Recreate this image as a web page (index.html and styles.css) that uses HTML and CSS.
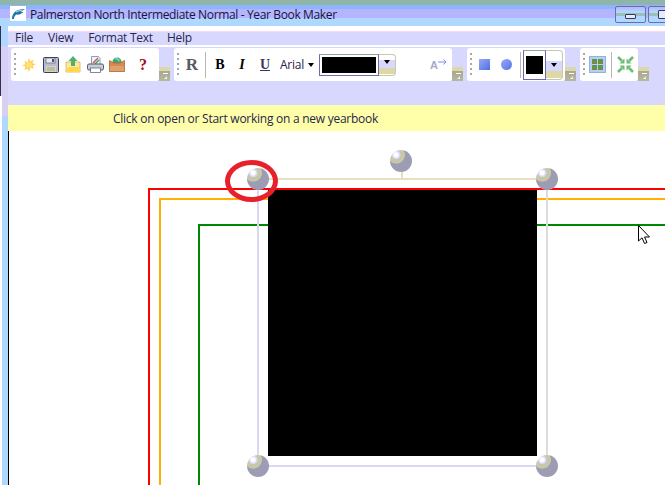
FILE: index.html
```html
<!DOCTYPE html>
<html lang="en">
<head>
  <meta charset="UTF-8">
  <title>Palmerston North Intermediate Normal - Year Book Maker</title>
  <link rel="stylesheet" href="styles.css">
</head>
<body>
  <div class="app">
    <header class="titlebar">
      <span class="app-icon">
        <svg width="16" height="15" viewBox="0 0 16 15"><path d="M2 13C2 7 6 3 15 3C13 4 12 5 11 6L13.500 6C11 8 9 9 6.500 8.500C5 9 4 11 4 13Z" fill="#1f78a8"/><path d="M6 6C8 5 10 4.500 12 4.500" stroke="#fff" stroke-width="0.8" fill="none"/></svg>
      </span>
      <span class="title-text">Palmerston North Intermediate Normal - Year Book Maker</span>
      <div class="win-buttons">
        <button class="win-btn"><span class="win-min"></span></button>
        <button class="win-btn"><span class="win-max"></span></button>
      </div>
    </header>

    <div class="frame">
      <div class="frame-edge"></div>
      <main class="main">
        <nav class="menubar">
          <span class="menu-file">File</span>
          <span class="menu-view">View</span>
          <span class="menu-format">Format Text</span>
          <span>Help</span>
        </nav>

        <div class="toolbars">
          <!-- file tools -->
          <div class="panel panel-file">
            <span class="grip"></span>
            <span class="tool">
              <svg width="16" height="16" viewBox="0 0 16 16"><path d="M8 1l1.300 3.500 3.200-1.800-1 3.500 3.500 1-3.200 1.400 1 3.400-3.200-1.500L8 15l-1.500-3.500-3 1.500 1-3.400L1 8.200l3.500-1-1-3.500 3 1.800z" fill="#ffd050"/><circle cx="8" cy="8" r="3" fill="#ffe078"/></svg>
            </span>
            <span class="tool">
              <svg width="16" height="16" viewBox="0 0 16 16"><rect x="0.500" y="0.500" width="15" height="15" rx="1" fill="#b8bcd0" stroke="#3c3c50"/><rect x="3" y="1" width="9" height="5" fill="#e8e8f0" stroke="#50506c" stroke-width="0.6"/><rect x="9" y="2" width="2" height="3" fill="#50506c"/><rect x="3" y="9" width="10" height="6" fill="#d8d4b8"/><path d="M4 11h8M4 13h8" stroke="#888" stroke-width="0.7"/></svg>
            </span>
            <span class="tool">
              <svg width="16" height="17" viewBox="0 0 16 17"><path d="M1 6h14v10H1z" fill="#ffe8a0" stroke="#d0b060" stroke-width="0.8"/><path d="M3 11h12v5H1z" fill="#ffd850"/><path d="M8 0l4.500 5H10v5H6V5H3.500z" fill="#50b070"/></svg>
            </span>
            <span class="tool">
              <svg width="17" height="17" viewBox="0 0 17 17"><path d="M4.500 0.500h7l1.500 2v7h-8.500z" fill="#eef4ff" stroke="#6a88b8" stroke-width="0.8"/><path d="M6 7l5-5" stroke="#e05040" stroke-width="1.500"/><path d="M8 8l4-4" stroke="#40a050" stroke-width="1.200"/><rect x="0.500" y="8" width="16" height="6" rx="1.500" fill="#c8ccd8" stroke="#505868"/><rect x="3.500" y="12" width="10" height="4.500" fill="#fff" stroke="#505868" stroke-width="0.7"/></svg>
            </span>
            <span class="tool">
              <svg width="16" height="15" viewBox="0 0 16 15"><circle cx="8" cy="5" r="4.500" fill="#3ca860"/><path d="M6 1.500c2 0 4 1 4 3" stroke="#80d0e0" stroke-width="1.500" fill="none"/><path d="M0.500 3.500L5 6h6l4.500-2.500V14.500H0.500z" fill="#d88850" stroke="#a86840" stroke-width="0.8"/><path d="M1 9h14v5H1z" fill="#e0a068"/></svg>
            </span>
            <span class="tool tool-help">?</span>
          </div>
          <span class="overflow"></span>

          <!-- text tools -->
          <div class="panel panel-text">
            <span class="grip"></span>
            <span class="tool tool-r">R</span>
            <span class="sep"></span>
            <span class="tool tool-b">B</span>
            <span class="tool tool-i">I</span>
            <span class="tool tool-u">U</span>
            <span class="font-pick">Arial</span>
            <span class="caret"></span>
            <span class="colour colour-wide"><span class="swatch"></span></span>
            <span class="colour-arrow colour-arrow-wide"><span class="caret"></span></span>
            <span class="text-size">A<svg width="9" height="6" viewBox="0 0 9 6"><path d="M0 3h8M5.500 0.500L8 3 5.500 5.500" fill="none" stroke="#7c8cf0"/></svg></span>
          </div>
          <span class="overflow"></span>

          <!-- shape tools -->
          <div class="panel panel-shape">
            <span class="grip"></span>
            <span class="tool"><span class="shape-square"></span></span>
            <span class="tool"><span class="shape-circle"></span></span>
            <span class="sep"></span>
            <span class="colour colour-tall"><span class="swatch"></span></span>
            <span class="colour-arrow colour-arrow-tall"><span class="caret"></span></span>
          </div>
          <span class="overflow"></span>

          <!-- layout tools -->
          <div class="panel panel-layout">
            <span class="grip"></span>
            <span class="tool">
              <svg width="17" height="17" viewBox="0 0 17 17"><rect x="0.500" y="0.500" width="16" height="16" fill="#b4d0f4" stroke="#98b0dc"/><rect x="3" y="3" width="5" height="5" fill="#5c9a48"/><rect x="9" y="3" width="5" height="5" fill="#5c9a48"/><rect x="3" y="9" width="5" height="5" fill="#5c9a48"/><rect x="9" y="9" width="5" height="5" fill="#5c9a48"/><path d="M3 7.500h5M9 7.500h5M3 13.500h5M9 13.500h5" stroke="#a87040"/></svg>
            </span>
            <span class="sep"></span>
            <span class="tool">
              <svg width="17" height="17" viewBox="0 0 17 17" fill="#6cbc74" stroke="none"><path d="M1 1L5 5M16 1L12 5M1 16L5 12M16 16L12 12" stroke="#6cbc74" stroke-width="2.500"/><path d="M7.500 7.500V2.500L2.500 7.500zM9.500 7.500V2.500L14.500 7.500zM7.500 9.500V14.500L2.500 9.500zM9.500 9.500V14.500L14.500 9.500z"/></svg>
            </span>
          </div>
          <span class="overflow"></span>
        </div>

        <div class="status">Click on open or Start working on a new yearbook</div>

        <section class="canvas">
          <div class="guide guide-red"></div>
          <div class="guide guide-orange"></div>
          <div class="guide guide-green"></div>
          <div class="photo"></div>
          <div class="sel-line sel-top"></div>
          <div class="sel-line sel-bottom"></div>
          <div class="sel-line sel-left"></div>
          <div class="sel-line sel-right"></div>
          <div class="sel-stem"></div>
          <span class="handle handle-rotate"></span>
          <span class="handle handle-tl"></span>
          <span class="handle handle-tr"></span>
          <span class="handle handle-bl"></span>
          <span class="handle handle-br"></span>
          <div class="callout"></div>
          <svg class="cursor" width="13" height="20" viewBox="0 0 13 20"><path d="M0.500 0.500V16L4 12.800 6.500 18.500 9 17.500 6.500 12H11.500z" fill="#fff" stroke="#000"/></svg>
        </section>
      </main>
    </div>
  </div>
</body>
</html>
```

FILE: styles.css
```css
html, body {
  margin: 0;
  padding: 0;
}
body {
  width: 665px;
  height: 485px;
  overflow: hidden;
  font-family: "Open Sans", "Noto Sans", sans-serif;
  font-size: 12px;
  color: #1c1c3c;
  background: #fff;
}
.app {
  width: 665px;
  height: 485px;
  display: flex;
  flex-direction: column;
}

/* title bar */
.titlebar {
  height: 26px;
  flex: none;
  display: flex;
  align-items: flex-start;
  box-sizing: border-box;
  padding-left: 10px;
  background: linear-gradient(#8fb5a8 0, #8fb5a8 5px, #8db4ff 5px, #8db4ff 9px, #b4b4ff 9px, #b4b4ff 18px, #b0d8ff 18px);
}
.app-icon {
  width: 16px;
  height: 15px;
  margin-top: 6px;
  background: #fff;
  display: flex;
}
.title-text {
  margin: 6px 0 0 4px;
  line-height: 17px;
  letter-spacing: -0.36px;
  color: #14143c;
  white-space: nowrap;
}
.win-buttons {
  margin-left: auto;
  display: flex;
  gap: 2px;
  width: 50px;
  flex: none;
  margin-top: 6px;
  overflow: hidden;
}
.win-btn {
  width: 31px;
  height: 17px;
  flex: none;
  padding: 0;
  box-sizing: border-box;
  border: 1px solid #6c6cac;
  border-radius: 2px;
  background: linear-gradient(#b4b4ff 0, #b0d8ff 5px, #b0d8ff 6px, #9cc0b4 6px, #9cc0b4 9px, #b0d8ff 9px);
  display: flex;
  align-items: center;
  justify-content: center;
}
.win-min {
  width: 9px;
  height: 3px;
  margin-top: 3px;
  border: 1px solid #36365c;
  border-radius: 1px;
  background: #e8e8ff;
}
.win-max {
  width: 9px;
  height: 7px;
  border: 1px solid #36365c;
  border-radius: 1px;
  background: #e8e8ff;
}

/* left frame and main area */
.frame {
  flex: 1;
  display: flex;
  min-height: 0;
}
.frame-edge {
  width: 8px;
  flex: none;
  background:
    linear-gradient(#30304c, #30304c) 0 0 / 1px 70px no-repeat,
    linear-gradient(#fff, #fff) 0 70px / 2px 100% no-repeat,
    linear-gradient(#b0d8ff 0, #b0d8ff 20px, #d8d0f4 20px, #d8d0f4 90px, #b0d8ff 90px);
}
.main {
  flex: 1;
  min-width: 0;
  display: flex;
  flex-direction: column;
  padding-top: 5px;
  background: #d8d8ff;
}

/* menu */
.menubar {
  height: 13px;
  flex: none;
  display: flex;
  align-items: flex-start;
  padding-left: 7px;
  border-top: 1px solid #ffd8f0;
  line-height: 11px;
  letter-spacing: -0.25px;
  color: #26264a;
  box-shadow: 0 -5px 0 #fff;
}
.menu-file { margin-right: 15px; }
.menu-view { margin-right: 15px; }
.menu-format { margin-right: 14px; }

/* toolbars */
.toolbars {
  height: 34px;
  flex: none;
  display: flex;
  align-items: flex-end;
  padding-left: 3px;
  border-top: 2px solid #fff;
  margin-bottom: 24px;
}
.panel {
  height: 33px;
  flex: none;
  display: flex;
  align-items: center;
  box-sizing: border-box;
  padding-left: 3px;
  background: #fff;
  border-radius: 3px;
}
.panel-file { width: 148px; }
.panel-text { width: 278px; }
.panel-shape { width: 98px; }
.panel-layout { width: 58px; }
.grip {
  width: 2px;
  height: 24px;
  flex: none;
  margin-right: 2px;
  background: repeating-linear-gradient(#a8a8a8 0, #a8a8a8 2px, transparent 2px, transparent 5px);
}
.panel-shape .grip,
.panel-layout .grip { margin-right: 1px; }
.tool {
  width: 22px;
  height: 22px;
  flex: none;
  display: flex;
  align-items: center;
  justify-content: center;
  font-family: "Liberation Serif", serif;
  font-weight: bold;
  font-size: 14px;
  color: #000;
}
.tool-help {
  margin-left: 4px;
  font-size: 16px;
  color: #a00c1c;
}
.tool-r {
  font-size: 17px;
  color: #5a5a60;
}
.tool-i { font-style: italic; }
.tool-u {
  text-decoration: underline;
  margin-left: 1px;
  color: #383858;
}
.sep {
  width: 1px;
  height: 26px;
  flex: none;
  background: #b8b8b0;
}
.panel-text .sep { margin: 0 3px 0 2px; }
.panel-shape .sep { margin: 0 2px 0 3px; }
.panel-layout .sep { margin: 0 2px 0 3px; }
.font-pick {
  margin: 0 4px 0 4px;
  letter-spacing: -0.25px;
  color: #26264a;
}
.caret {
  width: 0;
  height: 0;
  flex: none;
  border-style: solid;
  border-width: 4px 3.5px 0;
  border-color: #000 transparent transparent;
}
.colour {
  flex: none;
  box-sizing: border-box;
  display: flex;
  background: #fff;
  border: 1px solid;
  border-color: #8aa89a #6c6cac #6c6cac #6c6cac;
}
.colour-wide {
  width: 60px;
  height: 22px;
  padding: 2px;
  margin-left: 5px;
}
.colour-tall {
  width: 23px;
  height: 30px;
  padding: 5px 2px;
}
.swatch {
  flex: 1;
  background: #000;
}
.colour-arrow {
  flex: none;
  box-sizing: border-box;
  display: flex;
  justify-content: center;
  padding-top: 5px;
  border: 1px solid #c8c8a8;
  border-left: 0;
  border-radius: 0 4px 4px 0;
}
.colour-arrow-wide {
  width: 17px;
  height: 22px;
  background: linear-gradient(#fff 0, #fff 5px, #d8d8ff 5px, #d8d8ff 13px, #dcd8a8 13px, #dcd8a8 19px, #fff 19px);
}
.colour-arrow-tall {
  width: 17px;
  height: 30px;
  padding-top: 12px;
  background: linear-gradient(#fff 0, #fff 10px, #d8d8ff 10px, #d8d8ff 20px, #dcd8a8 20px, #dcd8a8 27px, #fff 27px);
}
.text-size {
  margin-left: 34px;
  display: flex;
  align-items: flex-start;
  font-family: "Liberation Sans", sans-serif;
  font-size: 11px;
  font-weight: bold;
  line-height: 12px;
  color: #a8a8c4;
}
.shape-square {
  width: 11px;
  height: 11px;
  background: linear-gradient(135deg, #9ca8f8, #4c70e0);
}
.shape-circle {
  width: 11px;
  height: 11px;
  border-radius: 50%;
  background: linear-gradient(135deg, #a0a8f8, #5474e4);
}
.overflow {
  width: 11px;
  height: 14px;
  flex: none;
  margin-right: 4px;
  box-sizing: border-box;
  padding: 2px 2px 0 4px;
  border-top: 4px solid #dcd8a8;
  background: linear-gradient(#a8a890, #b8b8a0);
  display: flex;
  flex-direction: column;
  align-items: flex-end;
  gap: 2px;
}
.overflow::before {
  content: "";
  width: 5px;
  height: 1px;
  background: #fff;
}
.overflow::after {
  content: "";
  width: 0;
  height: 0;
  margin-right: 1px;
  border-style: solid;
  border-width: 0 0 3px 3px;
  border-color: transparent transparent #f0f0e8;
}

/* status strip */
.status {
  height: 26px;
  flex: none;
  box-sizing: border-box;
  padding: 1px 0 0 105px;
  line-height: 26px;
  letter-spacing: -0.26px;
  color: #26264a;
  background: #ffffaa;
  overflow: hidden;
}

/* drawing area: everything here sits at its own place on the page */
.canvas {
  flex: 1;
  position: relative;
  overflow: hidden;
  background: #fff;
  border-left: 1px solid #000;
}
.guide {
  position: absolute;
  right: -20px;
  bottom: -20px;
  border-style: solid;
  border-width: 2px 0 0 2px;
}
.guide-red {
  left: 139px;
  top: 57px;
  border-color: #ff0000;
}
.guide-orange {
  left: 150px;
  top: 67px;
  border-color: #ffb000;
}
.guide-green {
  left: 189px;
  top: 93px;
  border-color: #008800;
}
.photo {
  position: absolute;
  left: 259px;
  top: 59px;
  width: 269px;
  height: 266px;
  background: #000;
}
.sel-line {
  position: absolute;
  background: #d8d8f0;
}
.sel-top {
  left: 250px;
  top: 47px;
  width: 288px;
  height: 2px;
  background: #e4e0c0;
}
.sel-bottom {
  left: 250px;
  top: 334px;
  width: 288px;
  height: 2px;
  background: #d8d8f0;
}
.sel-left {
  left: 248px;
  top: 47px;
  width: 2px;
  height: 288px;
}
.sel-right {
  left: 537px;
  top: 47px;
  width: 2px;
  height: 288px;
  background: linear-gradient(90deg, #d8d8f0 50%, #e4e0c0 50%);
}
.sel-stem {
  position: absolute;
  left: 392px;
  top: 39px;
  width: 2px;
  height: 8px;
  background: #e4e0c0;
}
.handle {
  position: absolute;
  width: 22px;
  height: 22px;
  border-radius: 50%;
  background: radial-gradient(circle at 28% 22%, #fff 0, #fff 9%, #d8d8ff 14%, #d8d8ff 17%, #c8c8a8 20%, #c8c8a8 36%, #9c9cb4 39%);
}
.handle-rotate { left: 381px; top: 19px; }
.handle-tl { left: 238px; top: 37px; }
.handle-tr { left: 527px; top: 37px; }
.handle-bl { left: 238px; top: 324px; }
.handle-br { left: 527px; top: 324px; }
.callout {
  position: absolute;
  left: 216px;
  top: 29px;
  width: 53px;
  height: 42px;
  box-sizing: border-box;
  border: 5px solid #e8202c;
  border-radius: 50%;
}
.cursor {
  position: absolute;
  left: 629px;
  top: 94px;
}
```
